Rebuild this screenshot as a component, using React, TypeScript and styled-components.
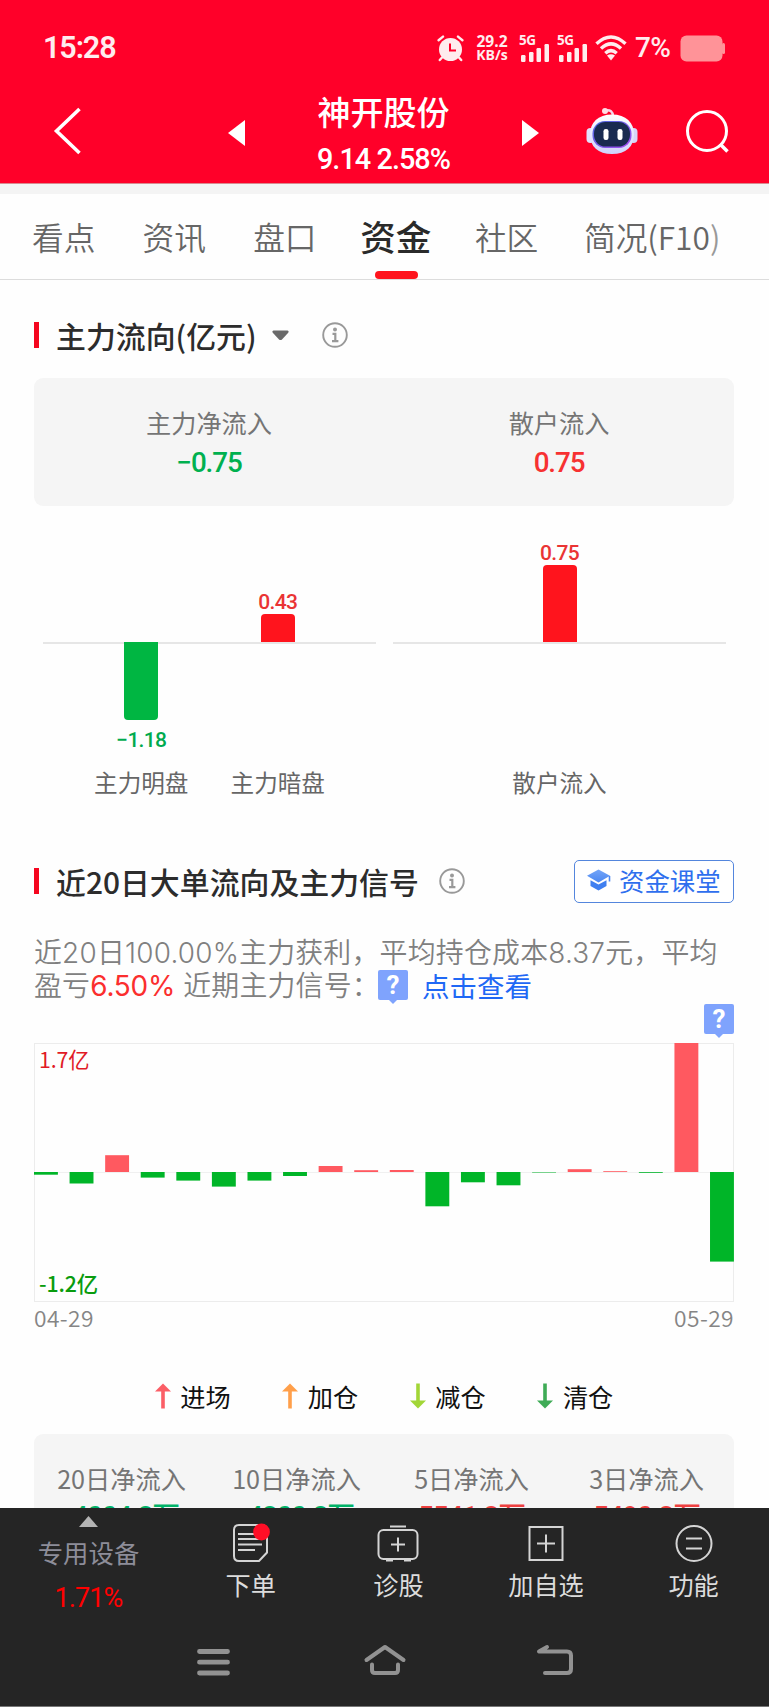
import React from "react";
import styled, { createGlobalStyle } from "styled-components";

const RED = "#ff141d";
const GREEN = "#00b642";

const GlobalStyle = createGlobalStyle`
  * { box-sizing: border-box; }
  body {
    margin: 0;
    background: #fff;
    font-family: "Noto Sans CJK SC", sans-serif;
    overflow: hidden;
  }
`;

const Screen = styled.div`
  width: 769px;
  height: 1707px;
  display: flex;
  flex-direction: column;
  overflow: hidden;
  background: #fefefe;
`;

/* ---------- header ---------- */

const Header = styled.header`
  height: 184px;
  flex: none;
  background: #ff0029;
  border-bottom: 1px solid #d98a90;
  color: #fff;
`;

const StatusBar = styled.div`
  height: 96px;
  padding: 0 44px 0 43px;
  display: flex;
  justify-content: space-between;
  align-items: center;
  color: #ffecee;
`;

const Clock = styled.span`
  font: 600 30.5px/40px Roboto, sans-serif;
  letter-spacing: -1.1px;
`;

const StatusIcons = styled.div`
  display: flex;
  align-items: center;
`;

const NetSpeed = styled.div`
  width: 32px;
  margin: 0 11px 0 12px;
  display: flex;
  flex-direction: column;
  align-items: center;
  font-family: "Open Sans", sans-serif;
  font-weight: 700;
  font-size: 15.5px;
  line-height: 14.5px;
  white-space: nowrap;
  span + span { font-size: 14px; }
`;

const Signal = styled.div`
  position: relative;
  width: 31px;
  height: 27px;
  margin-right: 7px;
  svg { display: block; }
`;

const SignalTag = styled.span`
  position: absolute;
  left: 0;
  top: -1px;
  font: 700 13.5px/13px "Open Sans", sans-serif;
  letter-spacing: -0.4px;
`;

const Percent = styled.span`
  font: 500 28px/36px Roboto, sans-serif;
  letter-spacing: -0.6px;
  width: 38px;
  margin: 0 7px 0 8px;
  white-space: nowrap;
`;

const TitleBar = styled.div`
  height: 87px;
  display: grid;
  grid-template-columns: 200px 367px 202px;
  grid-template-rows: 70px;
  align-items: center;
`;

const BackSlot = styled.div`
  padding: 0 0 0 53px;
  svg { display: block; }
`;

const StockSwitch = styled.div`
  display: flex;
  justify-content: space-between;
  align-items: center;
  height: 70px;
  padding: 0 28px;
  svg { display: block; margin-top: 3px; }
`;

const StockTitle = styled.div`
  text-align: center;
  white-space: nowrap;
  margin-top: 8px;
`;

const StockName = styled.div`
  font-size: 33px;
  line-height: 42px;
  font-weight: 500;
`;

const StockPrice = styled.div`
  font: 500 28.8px/44px Roboto, sans-serif;
  letter-spacing: -0.95px;
  margin-top: 5px;
`;

const HeaderActions = styled.div`
  display: flex;
  align-items: center;
  gap: 46px;
  padding: 0 0 0 19px;
  svg { display: block; }
`;

/* ---------- tabs ---------- */

const Tabs = styled.nav`
  flex: none;
  height: 96px;
  border-top: 10px solid #f4f4f4;
  border-bottom: 1px solid #dcdcdc;
  padding: 0 0 0 32px;
  display: flex;
  gap: 47.2px;
`;

const Tab = styled.div<{ $active?: boolean }>`
  position: relative;
  font-size: ${(p) => (p.$active ? 35.5 : 31.7)}px;
  font-weight: ${(p) => (p.$active ? 500 : 350)};
  margin: ${(p) => (p.$active ? "0 -3.5px" : "0")};
  color: ${(p) => (p.$active ? "#2a2a2a" : "#666")};
  line-height: ${(p) => (p.$active ? 84 : 84)}px;
  height: 85px;
  white-space: nowrap;
  &:last-child { margin-left: -1.5px; }
  &::after {
    content: "";
    display: ${(p) => (p.$active ? "block" : "none")};
    position: absolute;
    left: 50%;
    bottom: 0;
    width: 43px;
    height: 8px;
    margin-left: -21px;
    border-radius: 4px;
    background: ${RED};
  }
`;

const TabTail = styled.span`
  color: #999;
`;

/* ---------- content ---------- */

const Content = styled.main`
  flex: 1;
  min-height: 0;
  overflow: hidden;
  padding: 0 35px 0 34px;
`;

const SectionHead = styled.div<{ $top: number }>`
  display: flex;
  align-items: center;
  height: 44px;
  margin-top: ${(p) => p.$top}px;
  svg { display: block; }
  &::before {
    content: "";
    width: 5px;
    height: 26px;
    background: #f5061f;
    margin-right: 17px;
  }
`;

const SectionTitle = styled.h2`
  margin: 0;
  font-size: 29.9px;
  line-height: 44px;
  font-weight: 500;
  color: #2c2c2c;
  white-space: nowrap;
`;

const IconGap = styled.span<{ $left: number }>`
  margin-left: ${(p) => p.$left}px;
`;

const ClassButton = styled.button`
  margin-left: auto;
  width: 160px;
  height: 43px;
  border: 1.5px solid #5486dd;
  border-radius: 5px;
  background: #fff;
  display: flex;
  align-items: center;
  padding: 0 0 2px 12px;
  gap: 8px;
  color: #2f6fee;
  font: 400 25.4px/36px "Noto Sans CJK SC", sans-serif;
  white-space: nowrap;
`;

const SummaryCard = styled.div`
  margin-top: 21px;
  height: 128px;
  border-radius: 9px;
  background: #f5f5f5;
  display: grid;
  grid-template-columns: 1fr 1fr;
  padding-top: 25px;
`;

const SummaryCell = styled.div`
  text-align: center;
`;

const CellLabel = styled.div`
  font-size: 25.2px;
  line-height: 38px;
  color: #757575;
`;

const CellValue = styled.div<{ $color: string; $tight?: boolean }>`
  font: 500 27.8px / ${(p) => (p.$tight ? 39 : 43)}px Roboto, "Noto Sans CJK SC", sans-serif;
  letter-spacing: -1.1px;
  white-space: nowrap;
  color: ${(p) => p.$color};
`;

/* ---------- flow bars ---------- */

const FlowChart = styled.div`
  display: grid;
  grid-template-columns: 333px 333px;
  column-gap: 17px;
  padding: 0 9px;
  height: 303px;
`;

const FlowGroup = styled.div`
  display: flex;
  justify-content: center;
  background: linear-gradient(#e6e6e6, #e6e6e6) 0 136px / 100% 2px no-repeat;
`;

const FlowColumn = styled.div`
  width: 136.5px;
  display: grid;
  grid-template-rows: 136px 122px 40px;
  justify-items: center;
`;

const FlowUp = styled.div`
  display: flex;
  flex-direction: column;
  justify-content: flex-end;
  align-items: center;
`;

const FlowDown = styled.div`
  display: flex;
  flex-direction: column;
  align-items: center;
`;

const FlowBar = styled.div<{ $h: number; $down?: boolean }>`
  width: 34px;
  height: ${(p) => p.$h}px;
  background: ${(p) => (p.$down ? GREEN : RED)};
  border-radius: ${(p) => (p.$down ? "0 0 4px 4px" : "4px 4px 0 0")};
`;

const FlowValue = styled.div<{ $down?: boolean }>`
  font: 500 21px/24px Roboto, sans-serif;
  letter-spacing: -0.7px;
  color: ${(p) => (p.$down ? "#00aa4e" : "#ea3434")};
  margin: ${(p) => (p.$down ? "8px 0 0" : "0")};
`;

const FlowName = styled.div`
  font-size: 23.6px;
  line-height: 36px;
  color: #666;
  white-space: nowrap;
`;

/* ---------- summary text ---------- */

const Note = styled.div`
  margin-top: 34px;
  font-family: Inter, "Noto Sans CJK SC", sans-serif;
  font-size: 27.9px;
  font-weight: 350;
  letter-spacing: 0.22px;
  color: #808080;
`;

const NoteLine = styled.div`
  display: flex;
  align-items: center;
  height: 33px;
  line-height: 33px;
  white-space: nowrap;
`;

const Gain = styled.span`
  color: #fb2e2e;
  font-weight: 400;
  letter-spacing: -0.2px;
  margin: 0 8px 0 0;
`;

const NoteLink = styled.span`
  color: #1f68f5;
  font-weight: 400;
  font-size: 27.5px;
  letter-spacing: 0;
  margin: 1px 0 0 14px;
`;

const HintBadge = styled.span`
  position: relative;
  flex: none;
  width: 30px;
  height: 30px;
  border-radius: 2px;
  background: #7fa3fd;
  color: #fff;
  font: 700 26px/31px Roboto, sans-serif;
  letter-spacing: 0;
  text-align: center;
  &::after {
    content: "";
    position: absolute;
    left: 11px;
    top: 30px;
    border: 4px solid transparent;
    border-top-color: #7fa3fd;
    border-bottom: 0;
  }
`;

const InlineHint = styled.span`
  display: flex;
  margin: -4px 0 0 -2px;
`;

const HintRow = styled.div`
  display: flex;
  justify-content: flex-end;
  height: 39px;
  margin-top: 1px;
`;

/* ---------- daily chart ---------- */

const DailyChart = styled.div`
  position: relative;
  height: 259px;
  svg { display: block; overflow: visible; }
`;

const AxisLabel = styled.span<{ $bottom?: boolean }>`
  position: absolute;
  left: 5px;
  ${(p) => (p.$bottom ? "bottom: 5px; color: #0a9c0e;" : "top: 2px; color: #e11a26;")}
  letter-spacing: -0.1px;
  font-size: 21.3px;
  line-height: 28px;
  font-weight: ${(p) => (p.$bottom ? 500 : 400)};
`;

const DateRow = styled.div`
  display: flex;
  justify-content: space-between;
  font-size: 22.8px;
  line-height: 32px;
  height: 34px;
  font-weight: 350;
  color: #858585;
  letter-spacing: 0.4px;
`;

const Legend = styled.div`
  display: flex;
  justify-content: center;
  gap: 51.7px;
  margin-top: 42px;
  height: 56px;
`;

const LegendItem = styled.div`
  display: flex;
  align-items: center;
  gap: 9.5px;
  height: 36px;
  font-size: 25.2px;
  line-height: 36px;
  color: #111;
  svg { display: block; }
`;

const PeriodCard = styled.div`
  height: 128px;
  border-radius: 9px;
  background: #f5f5f5;
  display: grid;
  grid-template-columns: repeat(4, 1fr);
  padding-top: 25px;
  text-align: center;
`;

/* ---------- bottom bars ---------- */

const BottomBar = styled.footer`
  flex: none;
  height: 199px;
  background: #252525;
  border-bottom: 1px solid #777;
`;

const Actions = styled.div`
  height: 119px;
  display: grid;
  grid-template-columns: 177px repeat(4, 147.6px);
`;

const IndexCell = styled.div`
  display: flex;
  flex-direction: column;
  align-items: center;
  padding-top: 8px;
  svg { display: block; }
`;

const IndexName = styled.div`
  margin-top: 6px;
  font-size: 25.4px;
  line-height: 38px;
  color: #8d8d99;
`;

const IndexChange = styled.div`
  margin-top: 8px;
  font: 400 27px/38px Roboto, sans-serif;
  letter-spacing: -0.9px;
  color: #f00;
`;

const Action = styled.div`
  display: flex;
  flex-direction: column;
  align-items: center;
  padding-top: 14px;
  font-size: 25.2px;
  line-height: 38px;
  color: #dcdcdc;
  svg { display: block; margin-bottom: 3px; }
`;

const SystemNav = styled.div`
  height: 70px;
  padding: 0 190px;
  display: flex;
  justify-content: space-between;
  align-items: center;
`;

/* ---------- icons ---------- */

const AlarmIcon = () => (
  <svg width="27" height="27" viewBox="0 0 27 27">
    <circle cx="13.5" cy="14.5" r="11.5" fill="#ffecee" />
    <g stroke="#ffecee" strokeWidth="2.4" strokeLinecap="round" fill="none">
      <path d="M1.6 5.2 6 1.6M25.4 5.2 21 1.6M5 22.5 2.8 25M22 22.5l2.2 2.5" />
    </g>
    <path d="M13 8.5v7h6" fill="none" stroke="#ff0029" strokeWidth="2" />
  </svg>
);

const SignalIcon = () => (
  <Signal>
    <svg width="31" height="27" viewBox="0 0 31 27" fill="#ffecee">
      <rect x="2" y="20" width="4.5" height="7" rx="1.2" />
      <rect x="10" y="17" width="4.5" height="10" rx="1.2" />
      <rect x="17.5" y="13" width="4.5" height="14" rx="1.2" />
      <rect x="25.5" y="9" width="4.5" height="18" rx="1.2" />
    </svg>
    <SignalTag>5G</SignalTag>
  </Signal>
);

const WifiIcon = () => (
  <svg width="32" height="26" viewBox="0 0 32 26" fill="none" stroke="#ffecee" strokeWidth="3.4">
    <path d="M1.5 8.8Q16-4.8 30.5 8.8" />
    <path d="M6 13.6Q16 4.2 26 13.6" />
    <path d="M10.3 18.2Q16 13 21.7 18.2" />
    <path d="M12 20.5q4-2.6 8 0l-4 5z" fill="#ffecee" stroke="none" />
  </svg>
);

const BatteryIcon = () => (
  <svg width="45" height="27" viewBox="0 0 45 27">
    <rect x="0.5" y="0.5" width="42" height="26" rx="6" fill="#ff9398" />
    <rect x="42" y="8" width="3" height="11" rx="1.5" fill="#ff9398" />
  </svg>
);

const RobotIcon = () => (
  <svg width="52" height="48" viewBox="0 0 52 48">
    <defs>
      <linearGradient id="shell" x1="0" y1="0" x2="0" y2="1">
        <stop offset="0" stopColor="#fff" />
        <stop offset="1" stopColor="#cfd2fb" />
      </linearGradient>
      <linearGradient id="rim" x1="0" y1="0" x2="1" y2="1">
        <stop offset="0" stopColor="#4a6be0" />
        <stop offset="1" stopColor="#a64bf0" />
      </linearGradient>
    </defs>
    <path d="M19 3.500q8-1.500 8 6" fill="none" stroke="#f6d5ea" strokeWidth="2.4" />
    <circle cx="19" cy="4" r="3" fill="#ffdbe4" />
    <rect x="0.5" y="21" width="8" height="15" rx="4" fill="#e2e0fb" />
    <rect x="43.5" y="21" width="8" height="15" rx="4" fill="#d7d5f8" />
    <path d="M26 7.500c14 0 22 8 22 20s-8 19.500-22 19.500S4 39.500 4 27.500s8-20 22-20z" fill="url(#shell)" />
    <rect x="6.5" y="14" width="39" height="27" rx="12.5" fill="url(#rim)" />
    <rect x="8" y="15" width="36" height="24.5" rx="11.5" fill="#192a50" />
    <rect x="17.5" y="22" width="5" height="11" rx="2.2" fill="#fff" />
    <rect x="31.5" y="22" width="5" height="11" rx="2.2" fill="#fff" />
  </svg>
);

const InfoIcon = () => (
  <svg width="26" height="26" viewBox="0 0 26 26" fill="none" stroke="#999" strokeWidth="2.2">
    <circle cx="13" cy="13" r="11.8" strokeWidth="1.9" />
    <circle cx="13" cy="7.6" r="2" fill="#999" stroke="none" />
    <path d="M10.5 11.8H13.300V19M10 19.2h6.400" />
  </svg>
);

const CapIcon = () => (
  <svg width="24" height="22" viewBox="0 0 24 22">
    <defs>
      <linearGradient id="cap" x1="0" y1="0" x2="0" y2="1">
        <stop offset="0" stopColor="#74a5f8" />
        <stop offset="1" stopColor="#4a87f2" />
      </linearGradient>
    </defs>
    <path d="M11.500 0.500 23 6.800 11.500 13.500 0 6.800z" fill="url(#cap)" />
    <path d="M22.500 7v5.500" stroke="#4a87f2" strokeWidth="1.600" />
    <path d="M3.500 11.300l8 4.300 8-4.300v5.700l-8 4.500-8-4.500z" fill="#3f7ff0" />
  </svg>
);

const ArrowIcon = ({ color, down }: { color: string; down?: boolean }) => (
  <svg width="16" height="26" viewBox="0 0 16 26" fill={color}>
    <path
      d="M8 0.500 16 8.500H9.800V25.500H6.200V8.500H0z"
      transform={down ? "rotate(180 8 13)" : undefined}
    />
  </svg>
);

const OrderIcon = () => (
  <svg width="38" height="40" viewBox="0 0 38 40" fill="none" stroke="#d4d4d4" strokeWidth="2">
    <path d="M7 3H29q6 0 6 6V30.500L27 39H7q-5 0-5-5V8q0-5 5-5z" />
    <path d="M6 12h20M6 17h24M6 22.500h24M6 28h17" />
    <circle cx="29.5" cy="10" r="8.4" fill="#ff0e26" stroke="none" />
  </svg>
);

const DiagnoseIcon = () => (
  <svg width="42" height="40" viewBox="0 0 42 40" fill="none" stroke="#d4d4d4" strokeWidth="2">
    <path d="M13 4.500h16" />
    <rect x="1.5" y="8" width="39" height="29" rx="5" />
    <path d="M21 15.500v14M14 22.500h14M9 38.500h7M27 38.500h7" />
  </svg>
);

const AddIcon = () => (
  <svg width="36" height="40" viewBox="0 0 36 40" fill="none" stroke="#d4d4d4" strokeWidth="2">
    <rect x="1.5" y="5" width="33" height="33" />
    <path d="M18 12.500v18M9 21.500h18" />
  </svg>
);

const FeatureIcon = () => (
  <svg width="38" height="40" viewBox="0 0 38 40" fill="none" stroke="#d4d4d4" strokeWidth="2">
    <circle cx="19" cy="21.5" r="17.5" />
    <path d="M11 16.500h16M11 26.500h16" />
  </svg>
);

/* ---------- data ---------- */

/* Net large-order flow per day, in chart pixels (positive is inflow). */
const daily = [
  -2.7, -11.5, 16.8, -5.6, -8.6, -14.6, -8.6, -4, 6, 1.8,
  2, -34.3, -10.3, -13.3, -0.5, 2.8, 0.8, -0.8, 129, -89.6,
];

const periods = [
  { label: "20日净流入", value: "-4004.2万", color: "#00b368" },
  { label: "10日净流入", value: "-4200.2万", color: "#00b368" },
  { label: "5日净流入", value: "5541.2万", color: "#ee4040" },
  { label: "3日净流入", value: "5490.2万", color: "#ee4040" },
];

function UpColumn({ h, value, name }: { h: number; value: string; name: string }) {
  return (
    <FlowColumn>
      <FlowUp>
        <FlowValue>{value}</FlowValue>
        <FlowBar $h={h} />
      </FlowUp>
      <span />
      <FlowName>{name}</FlowName>
    </FlowColumn>
  );
}

export default function App() {
  return (
    <Screen>
      <GlobalStyle />
      <Header>
        <StatusBar>
          <Clock>15:28</Clock>
          <StatusIcons>
            <AlarmIcon />
            <NetSpeed>
              <span>29.2</span>
              <span>KB/s</span>
            </NetSpeed>
            <SignalIcon />
            <SignalIcon />
            <WifiIcon />
            <Percent>7%</Percent>
            <BatteryIcon />
          </StatusIcons>
        </StatusBar>
        <TitleBar>
          <BackSlot>
            <svg width="30" height="48" viewBox="0 0 30 48" fill="none" stroke="#fff" strokeWidth="3.6">
              <path d="M26.500 2 3.500 24 26.500 46" />
            </svg>
          </BackSlot>
          <StockSwitch>
            <svg width="17" height="26" viewBox="0 0 17 26" fill="#fff">
              <path d="M17 0v26L0 13z" />
            </svg>
            <StockTitle>
              <StockName>神开股份</StockName>
              <StockPrice>9.14 2.58%</StockPrice>
            </StockTitle>
            <svg width="17" height="26" viewBox="0 0 17 26" fill="#fff">
              <path d="M0 0v26l17-13z" />
            </svg>
          </StockSwitch>
          <HeaderActions>
            <RobotIcon />
            <svg width="46" height="46" viewBox="0 0 46 46" fill="none" stroke="#fff" strokeWidth="3">
              <circle cx="23" cy="23" r="19.5" />
              <path d="M36 36l7.500 7.500" strokeWidth="3.6" />
            </svg>
          </HeaderActions>
        </TitleBar>
      </Header>

      <Tabs>
        <Tab>看点</Tab>
        <Tab>资讯</Tab>
        <Tab>盘口</Tab>
        <Tab $active>资金</Tab>
        <Tab>社区</Tab>
        <Tab>
          简况(F10<TabTail>)</TabTail>
        </Tab>
      </Tabs>

      <Content>
        <SectionHead $top={33}>
          <SectionTitle>主力流向(亿元)</SectionTitle>
          <IconGap $left={15}>
            <svg width="17" height="11" viewBox="0 0 17 11" fill="#6a6a6a">
              <path d="M1.500 0.500h14q2 0.500 0.500 2.500l-6 6.500q-1.500 1.200-3 0L1 3Q-0.500 1 1.500 0.500z" />
            </svg>
          </IconGap>
          <IconGap $left={33.5}>
            <InfoIcon />
          </IconGap>
        </SectionHead>

        <SummaryCard>
          <SummaryCell>
            <CellLabel>主力净流入</CellLabel>
            <CellValue $color="#00b04f">−0.75</CellValue>
          </SummaryCell>
          <SummaryCell>
            <CellLabel>散户流入</CellLabel>
            <CellValue $color="#f73131">0.75</CellValue>
          </SummaryCell>
        </SummaryCard>

        <FlowChart>
          <FlowGroup>
            <FlowColumn>
              <span />
              <FlowDown>
                <FlowBar $h={78} $down />
                <FlowValue $down>−1.18</FlowValue>
              </FlowDown>
              <FlowName>主力明盘</FlowName>
            </FlowColumn>
            <UpColumn h={28} value="0.43" name="主力暗盘" />
          </FlowGroup>
          <FlowGroup>
            <UpColumn h={77} value="0.75" name="散户流入" />
          </FlowGroup>
        </FlowChart>

        <SectionHead $top={50}>
          <SectionTitle>近20日大单流向及主力信号</SectionTitle>
          <IconGap $left={20}>
            <InfoIcon />
          </IconGap>
          <ClassButton>
            <CapIcon />
            资金课堂
          </ClassButton>
        </SectionHead>

        <Note>
          <NoteLine>近20日100.00%主力获利，平均持仓成本8.37元，平均</NoteLine>
          <NoteLine>
            盈亏<Gain>6.50%</Gain>近期主力信号：
            <InlineHint>
              <HintBadge>?</HintBadge>
            </InlineHint>
            <NoteLink>点击查看</NoteLink>
          </NoteLine>
        </Note>
        <HintRow>
          <HintBadge>?</HintBadge>
        </HintRow>

        <DailyChart>
          <svg width="700" height="259" viewBox="0 0 700 259">
            <rect x="0.5" y="0.5" width="699" height="258" fill="none" stroke="#ececec" />
            <path d="M0 129.500H700" stroke="#f0f0f0" />
            {daily.map((v, i) => (
              <rect
                key={i}
                x={i * 35.58}
                y={v > 0 ? 129 - v : 129}
                width={23.9}
                height={Math.abs(v)}
                fill={v > 0 ? "#ff5960" : "#00b528"}
              />
            ))}
          </svg>
          <AxisLabel>1.7亿</AxisLabel>
          <AxisLabel $bottom>-1.2亿</AxisLabel>
        </DailyChart>
        <DateRow>
          <span>04-29</span>
          <span>05-29</span>
        </DateRow>

        <Legend>
          <LegendItem>
            <ArrowIcon color="#fb5e66" />
            进场
          </LegendItem>
          <LegendItem>
            <ArrowIcon color="#ff9f4a" />
            加仓
          </LegendItem>
          <LegendItem>
            <ArrowIcon color="#a2d637" down />
            减仓
          </LegendItem>
          <LegendItem>
            <ArrowIcon color="#3fab56" down />
            清仓
          </LegendItem>
        </Legend>

        <PeriodCard>
          {periods.map((p) => (
            <SummaryCell key={p.label}>
              <CellLabel>{p.label}</CellLabel>
              <CellValue $color={p.color} $tight>
                {p.value}
              </CellValue>
            </SummaryCell>
          ))}
        </PeriodCard>
      </Content>

      <BottomBar>
        <Actions>
          <IndexCell>
            <svg width="19" height="11" viewBox="0 0 19 11" fill="#b4b4b4">
              <path d="M9.500 0 19 11H0z" />
            </svg>
            <IndexName>专用设备</IndexName>
            <IndexChange>1.71%</IndexChange>
          </IndexCell>
          <Action>
            <OrderIcon />
            下单
          </Action>
          <Action>
            <DiagnoseIcon />
            诊股
          </Action>
          <Action>
            <AddIcon />
            加自选
          </Action>
          <Action>
            <FeatureIcon />
            功能
          </Action>
        </Actions>
        <SystemNav>
          <svg width="48" height="40" viewBox="0 0 48 40" stroke="#929292" strokeWidth="4.8" strokeLinecap="round">
            <path d="M9.500 9.500h28M9.500 20.200h28M9.500 31h28" />
          </svg>
          <svg width="48" height="40" viewBox="0 0 48 40" fill="none" stroke="#929292" strokeWidth="4" strokeLinecap="round" strokeLinejoin="round">
            <path d="M5.500 18 24 5 42.500 18M11 22.500V28q0 3 3 3h20q3 0 3-3v-5.500" />
          </svg>
          <svg width="48" height="40" viewBox="0 0 48 40" fill="none" stroke="#929292" strokeWidth="4" strokeLinecap="round" strokeLinejoin="round">
            <path d="M16 5 8 9.500H36q4 0 4 4V27q0 4-4 4H14" />
          </svg>
        </SystemNav>
      </BottomBar>
    </Screen>
  );
}
